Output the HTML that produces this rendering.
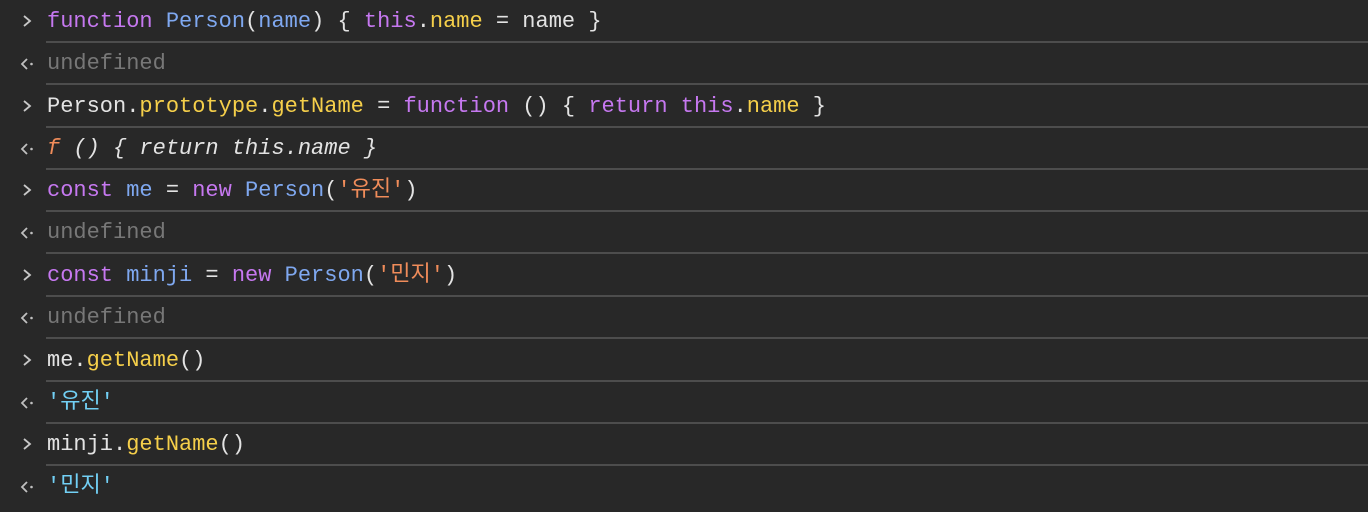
<!DOCTYPE html>
<html><head><meta charset="utf-8"><style>
body{margin:0;background:#282828;width:1368px;height:512px;overflow:hidden;font-family:"Liberation Mono","Noto Sans CJK KR",monospace;font-size:22px;color:#e3e3e3}
.r{position:absolute;left:0;right:0;height:42px}
.r .t{position:absolute;left:47px;top:7px;line-height:30px;white-space:pre}
.r .s{position:absolute;left:46px;right:0;bottom:-1px;height:2px;background:#4d4d4d}
.ic{position:absolute;left:20px;top:14px}
.k{color:#c678f0}.p{color:#7fa8f0}.y{color:#f5cf4a}.g{color:#777}.o{color:#f08c5a}.c{color:#72d0f5}
.i{font-style:italic}
</style></head><body>
<svg width="0" height="0" style="position:absolute"><defs>
<symbol id="gt" viewBox="0 0 14 14"><path d="M4 2 L10 7 L4 12" fill="none" stroke="#c8c8c8" stroke-width="1.8"/></symbol>
<symbol id="lt" viewBox="0 0 14 14"><path d="M7 3 L2 8 L7 13" fill="none" stroke="#c0c0c0" stroke-width="1.8"/><circle cx="11.5" cy="8" r="1.3" fill="#c0c0c0"/></symbol>
</defs></svg>
<div class="r" style="top:0"><svg class="ic" width="14" height="14"><use href="#gt"/></svg><span class="t"><span class="k">function</span> <span class="p">Person</span>(<span class="p">name</span>) { <span class="k">this</span>.<span class="y">name</span> = name }</span><div class="s"></div></div>
<div class="r" style="top:42px"><svg class="ic" width="14" height="14"><use href="#lt"/></svg><span class="t g">undefined</span><div class="s"></div></div>
<div class="r" style="top:84.5px"><svg class="ic" width="14" height="14"><use href="#gt"/></svg><span class="t">Person.<span class="y">prototype</span>.<span class="y">getName</span> = <span class="k">function</span> () { <span class="k">return</span> <span class="k">this</span>.<span class="y">name</span> }</span><div class="s"></div></div>
<div class="r" style="top:126.5px"><svg class="ic" width="14" height="14"><use href="#lt"/></svg><span class="t i"><span class="o">f</span> () { return this.name }</span><div class="s"></div></div>
<div class="r" style="top:169px"><svg class="ic" width="14" height="14"><use href="#gt"/></svg><span class="t"><span class="k">const</span> <span class="p">me</span> = <span class="k">new</span> <span class="p">Person</span>(<span class="o">'유진'</span>)</span><div class="s"></div></div>
<div class="r" style="top:211px"><svg class="ic" width="14" height="14"><use href="#lt"/></svg><span class="t g">undefined</span><div class="s"></div></div>
<div class="r" style="top:253.5px"><svg class="ic" width="14" height="14"><use href="#gt"/></svg><span class="t"><span class="k">const</span> <span class="p">minji</span> = <span class="k">new</span> <span class="p">Person</span>(<span class="o">'민지'</span>)</span><div class="s"></div></div>
<div class="r" style="top:296px"><svg class="ic" width="14" height="14"><use href="#lt"/></svg><span class="t g">undefined</span><div class="s"></div></div>
<div class="r" style="top:338.5px"><svg class="ic" width="14" height="14"><use href="#gt"/></svg><span class="t">me.<span class="y">getName</span>()</span><div class="s"></div></div>
<div class="r" style="top:380.5px"><svg class="ic" width="14" height="14"><use href="#lt"/></svg><span class="t c">'유진'</span><div class="s"></div></div>
<div class="r" style="top:423px"><svg class="ic" width="14" height="14"><use href="#gt"/></svg><span class="t">minji.<span class="y">getName</span>()</span><div class="s"></div></div>
<div class="r" style="top:465px"><svg class="ic" width="14" height="14"><use href="#lt"/></svg><span class="t c">'민지'</span></div>
</body></html>
